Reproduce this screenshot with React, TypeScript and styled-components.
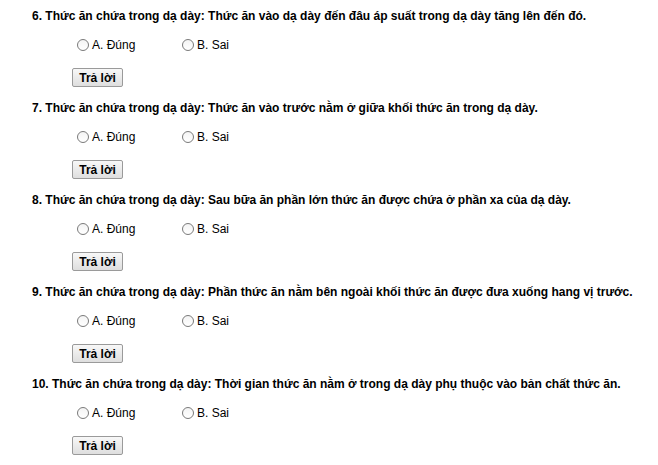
import React from "react";
import styled, { createGlobalStyle } from "styled-components";

const Global = createGlobalStyle`
  html, body { margin: 0; padding: 0; background: #ffffff; }
  body { font-family: "Liberation Sans", Arial, sans-serif; color: #000; }
`;

const Page = styled.div`
  display: flex;
  flex-direction: column;
  gap: 13px;
  padding: 8px 0 0 32px;
`;

const Question = styled.div`
  display: flex;
  flex-direction: column;
`;

const Title = styled.div`
  font-size: 12px;
  font-weight: bold;
  line-height: 16px;
  white-space: nowrap;
`;

const Options = styled.div`
  display: flex;
  align-items: center;
  height: 16px;
  margin: 13px 0 0 40px;
`;

const Option = styled.label`
  display: flex;
  align-items: center;
  width: 105px;
  font-size: 12px;
  line-height: 16px;
`;

const Radio = styled.input.attrs({ type: "radio" })`
  appearance: none;
  box-sizing: border-box;
  width: 12px;
  height: 12px;
  margin: 0 3px 0 5px;
  border: 1px solid #7a7a7a;
  border-radius: 50%;
  background: linear-gradient(#f4f4f4, #ffffff);
`;

const Button = styled.button`
  align-self: flex-start;
  box-sizing: border-box;
  margin: 15px 0 0 40px;
  height: 19px;
  width: 51px;
  padding: 0;
  font-family: "Liberation Sans", Arial, sans-serif;
  font-size: 12px;
  font-weight: bold;
  color: #000;
  border: 1px solid #9a9a9a;
  border-radius: 2px;
  background: linear-gradient(#f8f8f8, #dedede);
`;

const questions = [
  "6. Thức ăn chứa trong dạ dày: Thức ăn vào dạ dày đến đâu áp suất trong dạ dày tăng lên đến đó.",
  "7. Thức ăn chứa trong dạ dày: Thức ăn vào trước nằm ở giữa khối thức ăn trong dạ dày.",
  "8. Thức ăn chứa trong dạ dày: Sau bữa ăn phần lớn thức ăn được chứa ở phần xa của dạ dày.",
  "9. Thức ăn chứa trong dạ dày: Phần thức ăn nằm bên ngoài khối thức ăn được đưa xuống hang vị trước.",
  "10. Thức ăn chứa trong dạ dày: Thời gian thức ăn nằm ở trong dạ dày phụ thuộc vào bản chất thức ăn.",
];

export default function App() {
  return (
    <>
      <Global />
      <Page>
        {questions.map((q, i) => (
          <Question key={i}>
            <Title>{q}</Title>
            <Options>
              <Option>
                <Radio name={`q${i}`} />A. Đúng
              </Option>
              <Option>
                <Radio name={`q${i}`} />B. Sai
              </Option>
            </Options>
            <Button>Trả lời</Button>
          </Question>
        ))}
      </Page>
    </>
  );
}
